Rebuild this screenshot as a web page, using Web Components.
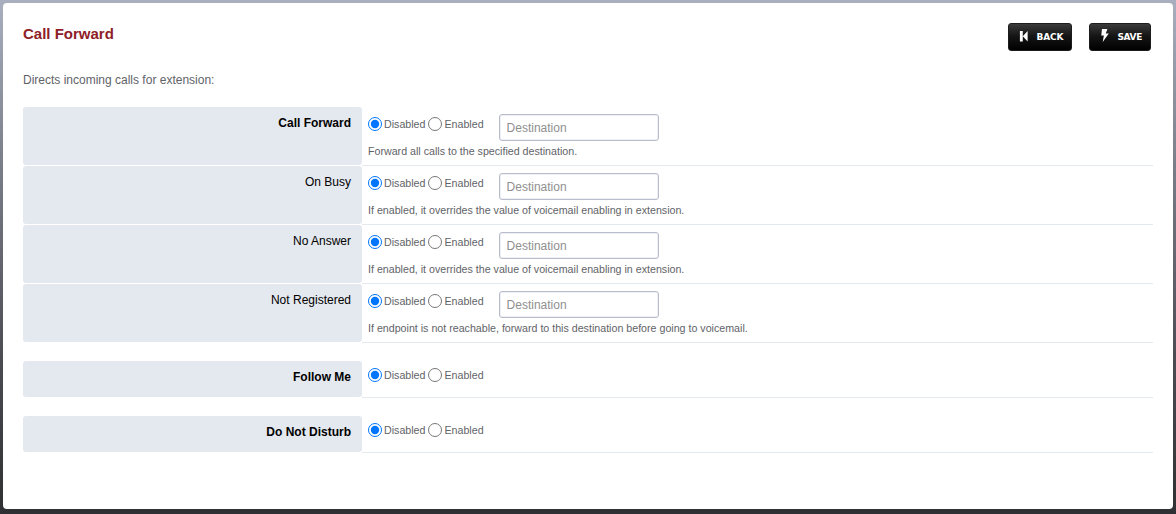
<!DOCTYPE html>
<html>
<head>
<meta charset="utf-8">
<style>
html, body { margin: 0; height: 514px; overflow: hidden; }
body {
    background: linear-gradient(to bottom, #a9afbf 0, #7d818c 30%, #4a4c52 70%, #2e3033 100%);
    font-family: "Liberation Sans", Arial, sans-serif;
}
</style>
</head>
<body>
<page-card>
    <page-header slot="header" heading="Call Forward">
        <action-button icon="back">BACK</action-button>
        <action-button icon="save">SAVE</action-button>
    </page-header>
    <span slot="intro">Directs incoming calls for extension:</span>

    <setting-group>
        <setting-row label="Call Forward" strong name="fwd_all" destination>Forward all calls to the specified destination.</setting-row>
        <setting-row label="On Busy" name="fwd_busy" destination>If enabled, it overrides the value of voicemail enabling in extension.</setting-row>
        <setting-row label="No Answer" name="fwd_answer" destination>If enabled, it overrides the value of voicemail enabling in extension.</setting-row>
        <setting-row label="Not Registered" name="fwd_reg" destination>If endpoint is not reachable, forward to this destination before going to voicemail.</setting-row>
    </setting-group>
    <setting-group>
        <setting-row label="Follow Me" strong name="follow_me"></setting-row>
    </setting-group>
    <setting-group>
        <setting-row label="Do Not Disturb" strong name="dnd"></setting-row>
    </setting-group>
</page-card>

<script>
class PageCard extends HTMLElement {
    constructor() {
        super();
        this.attachShadow({ mode: 'open' });
    }

    connectedCallback() {
        this.shadowRoot.innerHTML = `
            <style>
                :host {
                    display: block;
                    box-sizing: border-box;
                    height: 506px;
                    margin: 3px 3px 0 3px;
                    padding: 20px 20px 0 20px;
                    background: #fff;
                    border-radius: 4px;
                }
                .intro {
                    margin: 0 0 20px 0;
                    font-size: 12px;
                    line-height: 14px;
                    color: #5f6368;
                }
            </style>
            <slot name="header"></slot>
            <div class="intro"><slot name="intro"></slot></div>
            <slot></slot>
        `;
    }
}

class PageHeader extends HTMLElement {
    constructor() {
        super();
        this.attachShadow({ mode: 'open' });
    }

    connectedCallback() {
        this.shadowRoot.innerHTML = `
            <style>
                :host {
                    display: flex;
                    justify-content: space-between;
                    align-items: flex-start;
                    height: 50px;
                }
                h1 {
                    margin: 3px 0 0 0;
                    font-size: 15px;
                    line-height: 16px;
                    font-weight: bold;
                    color: #8e2028;
                }
                .actions {
                    display: flex;
                    gap: 17px;
                    margin-right: 2px;
                }
            </style>
            <h1>${this.getAttribute('heading')}</h1>
            <div class="actions"><slot></slot></div>
        `;
    }
}

const BUTTON_ICONS = {
    back: '<path d="M1 2h3.2v10.5H1zM9.6 2v10.5L4.2 7.2z"/>',
    save: '<path d="M2.2 0h6L6.4 4.6h3.4L3 13l1.3-6.6H1.4z"/>'
};

class ActionButton extends HTMLElement {
    constructor() {
        super();
        this.attachShadow({ mode: 'open' });
    }

    connectedCallback() {
        const icon = this.getAttribute('icon');
        this.shadowRoot.innerHTML = `
            <style>
                :host {
                    display: flex;
                    box-sizing: border-box;
                    align-items: center;
                    height: 28px;
                    padding: 0 8px 0 10px;
                    background: linear-gradient(to bottom, #3a3a3a 0, #161616 45%, #000 100%);
                    border: 1px solid #1c1c1c;
                    border-radius: 3px;
                    color: #fff;
                    font-family: "DejaVu Sans", Tahoma, sans-serif;
                    font-size: 9px;
                    font-weight: bold;
                    letter-spacing: -0.1px;
                }
                :host([icon=save]) {
                    letter-spacing: -0.35px;
                }
                svg {
                    width: 9px;
                    height: 13px;
                    fill: #fff;
                    margin-right: 8px;
                    margin-top: -3px;
                }
            </style>
            <svg viewBox="0 0 10 13" preserveAspectRatio="none">${BUTTON_ICONS[icon]}</svg>
            <slot></slot>
        `;
    }
}

class SettingGroup extends HTMLElement {
    constructor() {
        super();
        this.attachShadow({ mode: 'open' });
    }

    connectedCallback() {
        this.shadowRoot.innerHTML = `
            <style>
                :host {
                    display: block;
                    margin-bottom: 18px;
                }
            </style>
            <slot></slot>
        `;
    }
}

class SettingRow extends HTMLElement {
    constructor() {
        super();
        this.attachShadow({ mode: 'open' });
    }

    connectedCallback() {
        const name = this.getAttribute('name');
        const weight = this.hasAttribute('strong') ? 'bold' : 'normal';
        const destination = this.hasAttribute('destination');
        this.shadowRoot.innerHTML = `
            <style>
                :host {
                    display: grid;
                    grid-template-columns: 339px 1fr;
                    width: 1130px;
                }
                .label {
                    box-sizing: border-box;
                    margin-bottom: 1px;
                    padding: 9px 11px 0 0;
                    background: #e4e8ef;
                    border-radius: 3px;
                    text-align: right;
                    font-size: 12px;
                    line-height: 15px;
                    font-weight: ${weight};
                    color: #000;
                }
                .value {
                    padding: ${destination ? 7 : 4}px 0 ${destination ? 7 : 12}px 6px;
                    border-bottom: 1px solid #e4e8ef;
                    font-size: 10.67px;
                    color: #5f6368;
                }
                .controls {
                    display: flex;
                    align-items: flex-start;
                }
                label {
                    display: flex;
                    align-items: center;
                    height: 20px;
                    margin-right: 3px;
                    line-height: 14px;
                }
                input[type=radio] {
                    width: 14px;
                    height: 14px;
                    margin: 0 2px 0 0;
                }
                input[type=text] {
                    box-sizing: border-box;
                    width: 160px;
                    height: 27px;
                    margin-left: 12px;
                    padding: 0 7px;
                    border: 1px solid #b9bdcb;
                    border-radius: 3px;
                    box-shadow: inset 0 0 0 1px #eef0f4;
                    font: 12px "Liberation Sans", Arial, sans-serif;
                    outline: none;
                }
                input[type=text]::placeholder { color: #8f8f8f; }
                .hint {
                    margin-top: 3px;
                    font-size: 10.67px;
                    line-height: 14px;
                }
            </style>
            <div class="label">${this.getAttribute('label')}</div>
            <div class="value">
                <div class="controls">
                    <label><input type="radio" name="${name}" checked>Disabled</label>
                    <label><input type="radio" name="${name}">Enabled</label>
                    ${destination ? '<input type="text" placeholder="Destination">' : ''}
                </div>
                ${destination ? '<div class="hint"><slot></slot></div>' : ''}
            </div>
        `;
    }
}

customElements.define('page-card', PageCard);
customElements.define('page-header', PageHeader);
customElements.define('action-button', ActionButton);
customElements.define('setting-group', SettingGroup);
customElements.define('setting-row', SettingRow);
</script>
</body>
</html>
